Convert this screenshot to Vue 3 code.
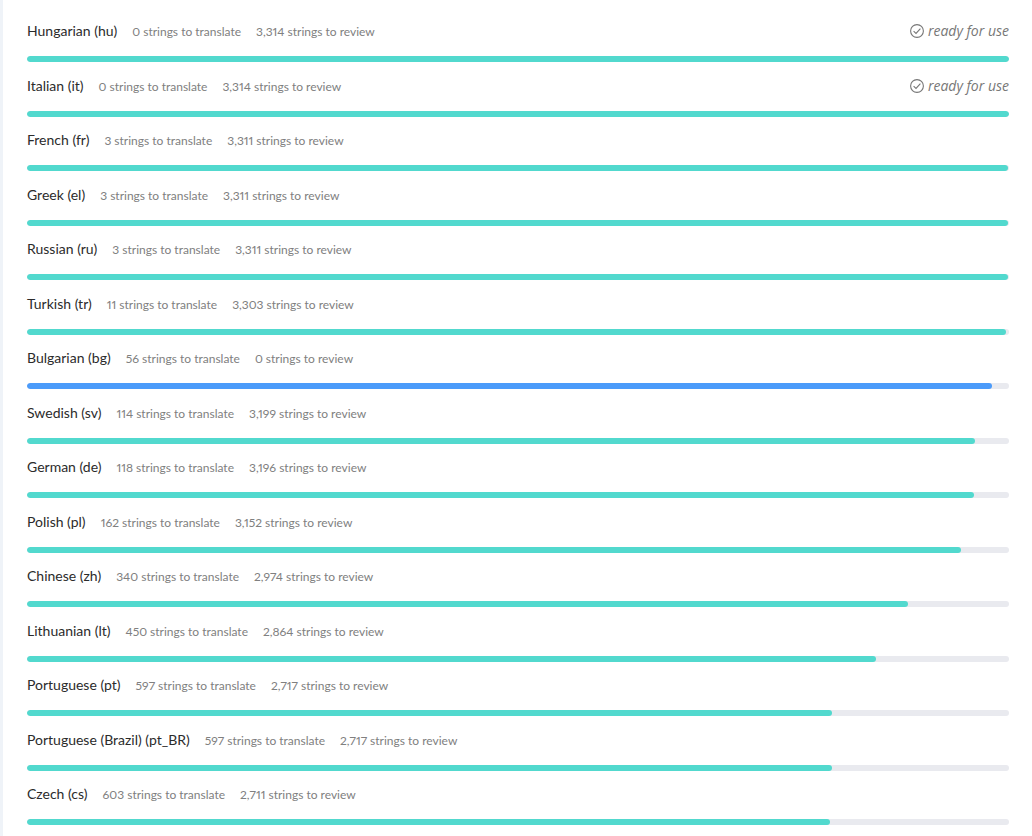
<script setup>
const total = 3314

const languages = [
  { name: 'Hungarian', code: 'hu', translate: 0, review: 3314 },
  { name: 'Italian', code: 'it', translate: 0, review: 3314 },
  { name: 'French', code: 'fr', translate: 3, review: 3311 },
  { name: 'Greek', code: 'el', translate: 3, review: 3311 },
  { name: 'Russian', code: 'ru', translate: 3, review: 3311 },
  { name: 'Turkish', code: 'tr', translate: 11, review: 3303 },
  { name: 'Bulgarian', code: 'bg', translate: 56, review: 0 },
  { name: 'Swedish', code: 'sv', translate: 114, review: 3199 },
  { name: 'German', code: 'de', translate: 118, review: 3196 },
  { name: 'Polish', code: 'pl', translate: 162, review: 3152 },
  { name: 'Chinese', code: 'zh', translate: 340, review: 2974 },
  { name: 'Lithuanian', code: 'lt', translate: 450, review: 2864 },
  { name: 'Portuguese', code: 'pt', translate: 597, review: 2717 },
  { name: 'Portuguese (Brazil)', code: 'pt_BR', translate: 597, review: 2717 },
  { name: 'Czech', code: 'cs', translate: 603, review: 2711 },
]

const format = (n) => n.toLocaleString('en-US')
const percent = (lang) => ((total - lang.translate) / total) * 100
</script>

<template>
  <main class="panel">
    <ul class="languages">
      <li v-for="lang in languages" :key="lang.code" class="language">
        <div class="summary">
          <span class="name">{{ lang.name }} ({{ lang.code }})</span>
          <span class="count">{{ format(lang.translate) }} strings to translate</span>
          <span class="count">{{ format(lang.review) }} strings to review</span>
          <span v-if="lang.translate === 0" class="ready">
            <svg class="check" viewBox="0 0 14 14" aria-hidden="true">
              <circle cx="7" cy="7" r="6.4" />
              <path d="M3.6 7.2 6 9.4 10.4 4.6" />
            </svg>
            <em>ready for use</em>
          </span>
        </div>
        <div
          class="track"
          role="progressbar"
          :aria-label="lang.name"
          :aria-valuenow="Math.round(percent(lang))"
          aria-valuemin="0"
          aria-valuemax="100"
        >
          <div
            class="fill"
            :class="{ reviewed: lang.review === 0 }"
            :style="{ width: percent(lang) + '%' }"
          ></div>
        </div>
      </li>
    </ul>
  </main>
</template>

<style>
body {
  margin: 0;
  background: #fff;
}
</style>

<style scoped>
.panel {
  box-sizing: border-box;
  min-height: 100vh;
  padding: 8px 23px 11px 24px;
  border-left: 3px solid #eff3f8;
  background: #fff;
  font-family: Lato, "Open Sans", sans-serif;
}

.languages {
  display: grid;
  grid-auto-rows: 54px 55px;
  margin: 0;
  padding: 0;
  list-style: none;
}

.language {
  display: flex;
  flex-direction: column;
  justify-content: flex-end;
  gap: 15px;
}

.summary {
  display: flex;
  align-items: baseline;
  height: 20px;
  gap: 15px;
  line-height: 20px;
  white-space: nowrap;
}

.name {
  color: #2b2b2b;
  font-size: 14px;
}

.count {
  color: #808080;
  font-size: 12px;
  font-variant-numeric: proportional-nums;
}

.ready {
  display: flex;
  align-items: baseline;
  gap: 4px;
  margin-left: auto;
  color: #777;
  font-family: "Open Sans", sans-serif;
  font-size: 14px;
}

.check {
  align-self: center;
  width: 14px;
  height: 14px;
  fill: none;
  stroke: currentColor;
  stroke-width: 1.1;
}

.track {
  height: 6px;
  border-radius: 3px;
  background: #e9eaef;
  overflow: hidden;
}

.fill {
  height: 100%;
  border-radius: 3px;
  background: #52d9ce;
}

.fill.reviewed {
  background: #4b9bfa;
}
</style>
